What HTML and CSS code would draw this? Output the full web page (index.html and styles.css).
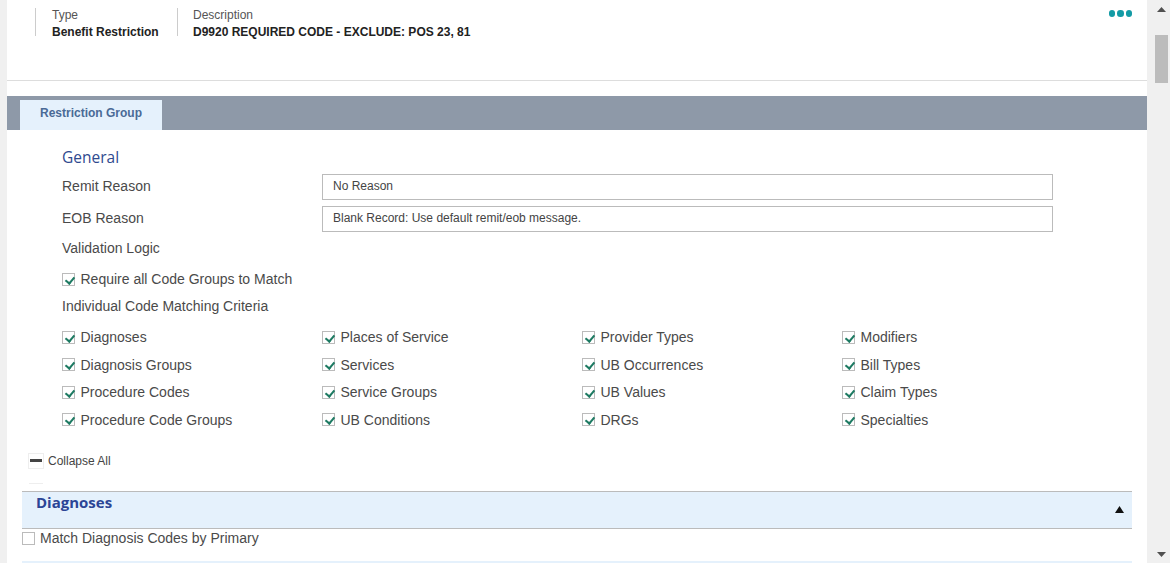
FILE: index.html
```html
<!DOCTYPE html>
<html>
<head>
<meta charset="utf-8">
<title>Restriction Group</title>
<link rel="stylesheet" href="styles.css">
</head>
<body>
<div class="page">
  <div class="main">
    <div class="summary">
      <div class="field field-type">
        <div class="field-label">Type</div>
        <div class="field-value">Benefit Restriction</div>
      </div>
      <div class="field">
        <div class="field-label">Description</div>
        <div class="field-value">D9920 REQUIRED CODE - EXCLUDE: POS 23, 81</div>
      </div>
      <div class="dots"><span></span><span></span><span></span></div>
    </div>

    <div class="tabbar">
      <div class="tab">Restriction Group</div>
    </div>

    <div class="general">
      <h2 class="section-title">General</h2>
      <div class="form-row">
        <label class="form-label">Remit Reason</label>
        <div class="select">No Reason</div>
      </div>
      <div class="form-row">
        <label class="form-label">EOB Reason</label>
        <div class="select">Blank Record: Use default remit/eob message.</div>
      </div>
      <div class="plain-label label-logic">Validation Logic</div>
      <div class="check check-require"><span class="box on"></span>Require all Code Groups to Match</div>
      <div class="plain-label label-criteria">Individual Code Matching Criteria</div>
      <div class="criteria">
        <div class="check"><span class="box on"></span>Diagnoses</div>
        <div class="check"><span class="box on"></span>Places of Service</div>
        <div class="check"><span class="box on"></span>Provider Types</div>
        <div class="check"><span class="box on"></span>Modifiers</div>
        <div class="check"><span class="box on"></span>Diagnosis Groups</div>
        <div class="check"><span class="box on"></span>Services</div>
        <div class="check"><span class="box on"></span>UB Occurrences</div>
        <div class="check"><span class="box on"></span>Bill Types</div>
        <div class="check"><span class="box on"></span>Procedure Codes</div>
        <div class="check"><span class="box on"></span>Service Groups</div>
        <div class="check"><span class="box on"></span>UB Values</div>
        <div class="check"><span class="box on"></span>Claim Types</div>
        <div class="check"><span class="box on"></span>Procedure Code Groups</div>
        <div class="check"><span class="box on"></span>UB Conditions</div>
        <div class="check"><span class="box on"></span>DRGs</div>
        <div class="check"><span class="box on"></span>Specialties</div>
      </div>
    </div>

    <div class="collapse-all"><span class="minus"></span>Collapse All</div>
    <div class="faint"></div>

    <div class="panel-head">
      <span class="panel-title">Diagnoses</span>
      <svg class="caret" width="9" height="7" viewBox="0 0 9 7"><path d="M4.5 0 L9 7 L0 7 Z" fill="#111"/></svg>
    </div>
    <div class="check check-primary"><span class="box"></span>Match Diagnosis Codes by Primary</div>
    <div class="panel-next"></div>
  </div>

  <div class="scrollbar">
    <svg class="arrow-up" width="9" height="5" viewBox="0 0 9 5"><path d="M4.5 0 L9 5 L0 5 Z" fill="#505050"/></svg>
    <div class="thumb"></div>
    <svg class="arrow-down" width="9" height="5" viewBox="0 0 9 5"><path d="M0 0 L9 0 L4.5 5 Z" fill="#505050"/></svg>
  </div>
</div>
</body>
</html>
```

FILE: styles.css
```css
*{ box-sizing:border-box; margin:0; padding:0; }
html,body{ width:1170px; height:563px; overflow:hidden; }
body{ font-family:"Liberation Sans",Arial,sans-serif; color:#4a4a4a; background:#f0f0f0; }

.page{ display:flex; height:563px; padding-left:7px; }
.main{ width:1140px; height:563px; background:#fff; overflow:hidden; }

/* summary strip */
.summary{ display:flex; height:81px; padding:8px 15px 0 28px; border-bottom:1px solid #ddd; }
.field{ height:28px; border-left:1px solid #ccc; padding-left:15px; font-size:12px; line-height:15px; }
.field-type{ width:142px; padding-left:16px; }
.field-label{ color:#555; }
.field-value{ margin-top:2px; font-weight:bold; color:#222; }
.dots{ display:flex; gap:2px; margin-left:auto; padding-top:2px; }
.dots span{ width:6.5px; height:6.5px; border-radius:50%; background:#139ba5; }

/* tabs */
.tabbar{ height:34px; margin-top:15px; padding:4px 0 0 13px; background:#8e99a8; }
.tab{ width:142px; height:30px; background:#e5f1fc; padding-top:5px; text-align:center; font-size:12px; line-height:16px; font-weight:bold; color:#4a6a96; }

/* general form */
.general{ padding:17px 0 0 55px; font-size:14px; }
.section-title{ font-family:"Open Sans",sans-serif; font-size:15.5px; line-height:20px; font-weight:normal; color:#2f4a8f; }
.form-row{ display:flex; align-items:center; height:26px; margin-bottom:6px; }
.form-row:first-of-type{ margin-top:7px; }
.form-label{ width:260px; padding-bottom:2px; }
.select{ width:731px; height:26px; border:1px solid #bbb; padding-left:10px; font-size:12px; line-height:22px; color:#444; }
.plain-label{ line-height:18px; }
.label-logic{ margin-top:7px; }
.label-criteria{ margin-top:9px; }

.check{ display:flex; align-items:center; height:18px; line-height:18px; }
.check-require{ margin-top:13px; }
.box{ flex:none; position:relative; width:13px; height:13px; margin-right:5.5px; border:1px solid #bbb; background:#fff; }
.box.on::after{ content:""; position:absolute; left:3.5px; top:1px; width:4px; height:7px; border:solid #1d7a62; border-width:0 2px 2px 0; transform:rotate(40deg); }

.criteria{ display:grid; grid-template-columns:repeat(4,260px); grid-auto-rows:18px; row-gap:9.67px; margin-top:13px; }

/* collapse */
.collapse-all{ display:flex; align-items:center; height:16px; margin:24px 0 0 21px; font-size:12px; color:#444; }
.minus{ display:flex; align-items:center; width:16px; height:16px; margin-right:4px; padding:0 1px; border:1px solid #eee; }
.minus::before{ content:""; width:100%; height:3px; background:#444; }
.faint{ width:14px; height:1px; margin:14px 0 0 22px; background:#eee; }

/* panels */
.panel-head{ display:flex; align-items:flex-start; justify-content:space-between; width:1110px; height:38px; margin:7px 0 0 15px; padding:0 8px 0 14px; background:#e5f1fc; border-top:1px solid #bbb; border-bottom:1px solid #bbb; }
.panel-title{ font-family:"Open Sans",sans-serif; font-size:15px; line-height:20px; font-weight:bold; color:#2b4596; }
.caret{ margin-top:14px; }
.check-primary{ height:18px; margin:0 0 0 15px; padding-top:1px; font-size:14px; }
.check-primary .box{ margin-right:5px; }
.panel-next{ width:1110px; height:6px; margin:14px 0 0 15px; background:#e5f1fc; }

/* fake scrollbar */
.scrollbar{ flex:1; height:563px; background:#f0f0f0; display:flex; flex-direction:column; align-items:center; padding-left:6px; }
.arrow-up{ margin-top:7px; }
.thumb{ width:13px; height:48px; margin-top:23px; background:#bcbcbc; }
.arrow-down{ margin-top:auto; margin-bottom:6px; }
```
